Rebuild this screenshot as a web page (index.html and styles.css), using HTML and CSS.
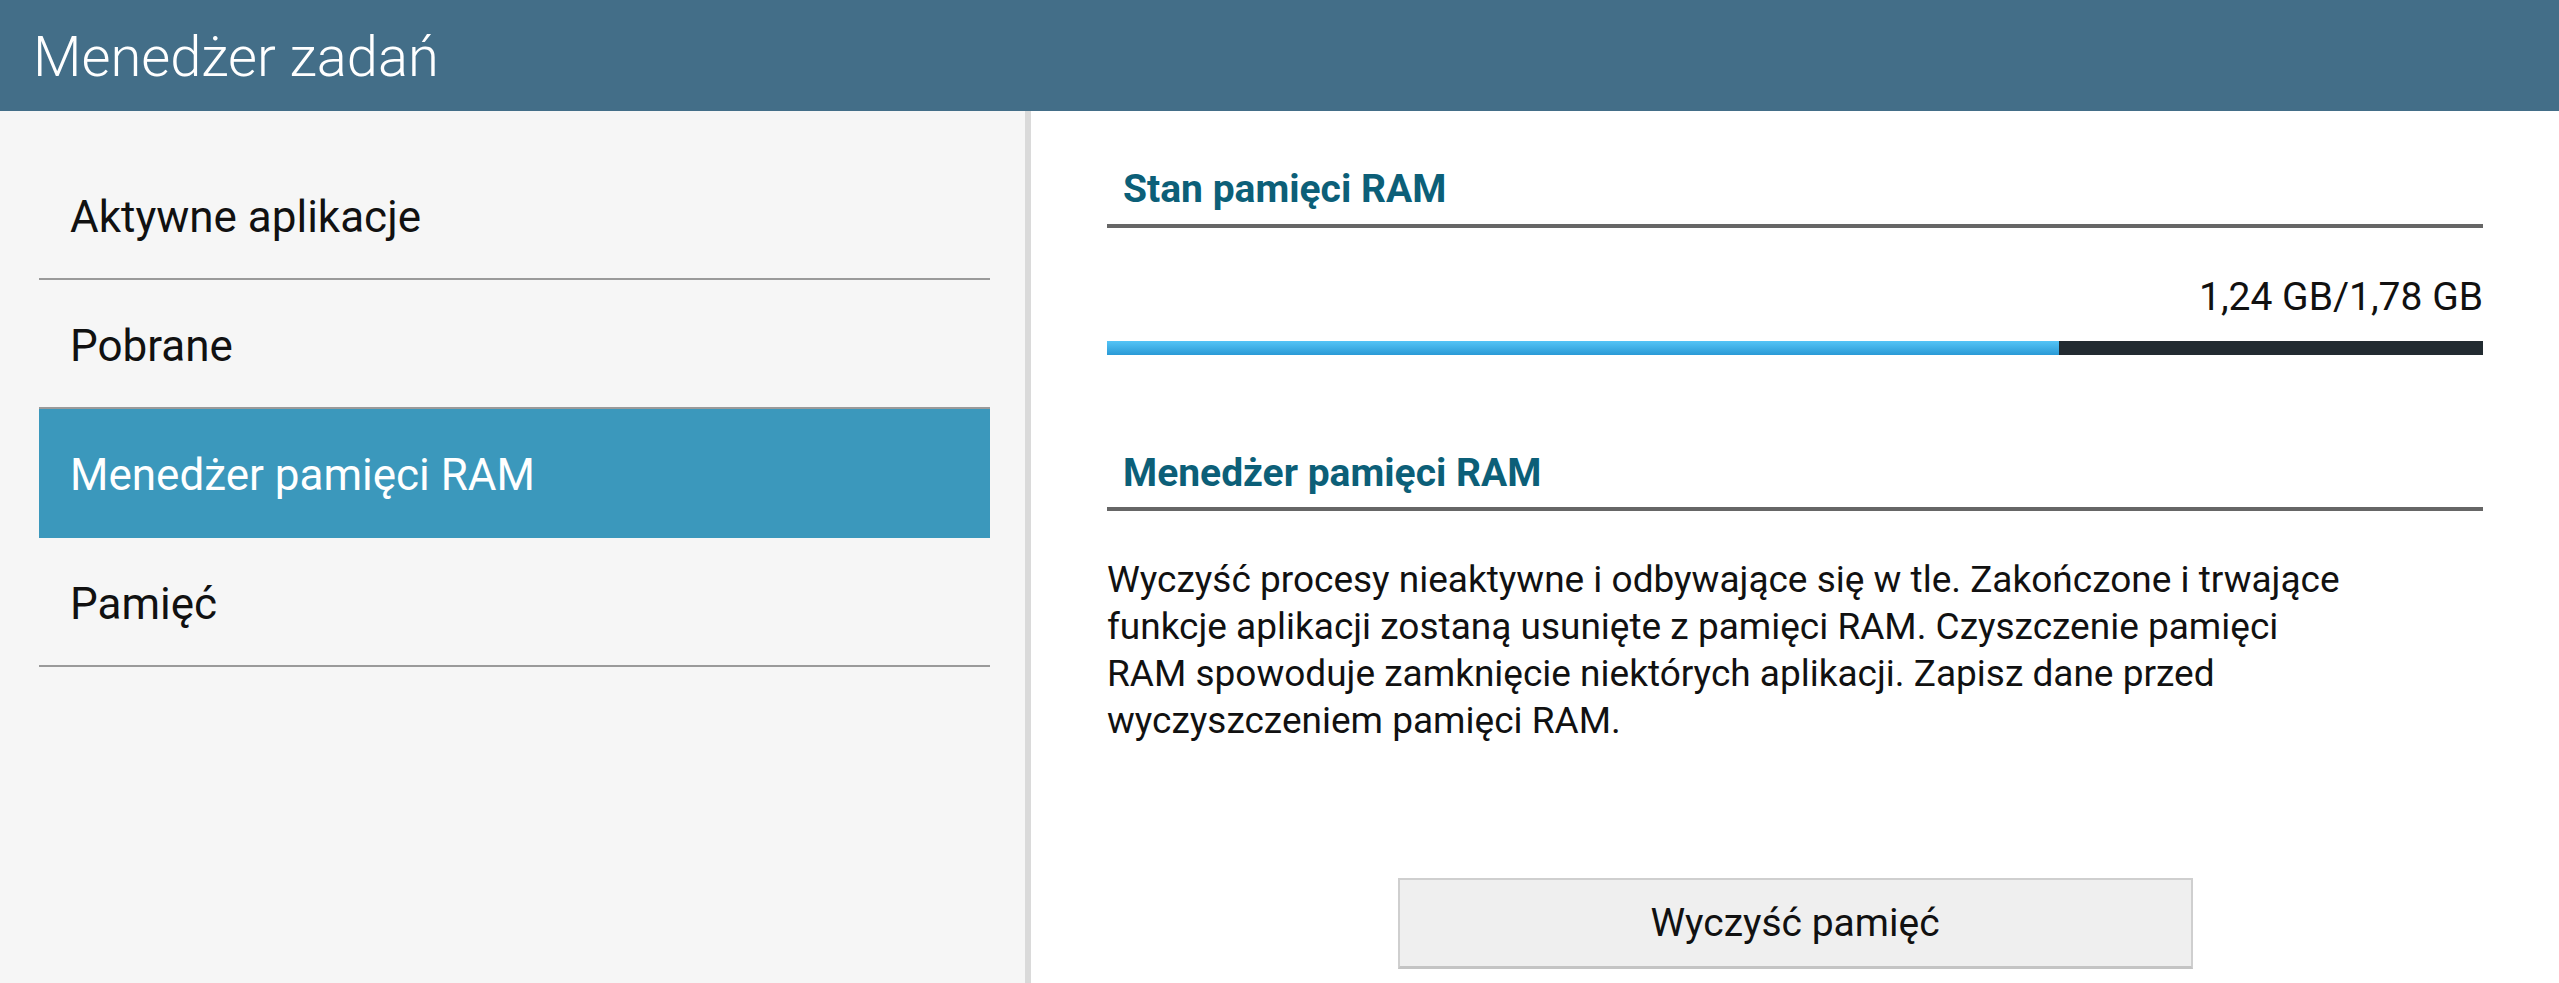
FILE: index.html
```html
<!DOCTYPE html>
<html lang="pl">
<head>
    <meta charset="UTF-8">
    <meta name="viewport" content="width=device-width, initial-scale=1.0">
    <title>Menedżer zadań</title>
    <link rel="stylesheet" href="styles.css">
</head>
<body>
    <header class="app-bar">
        <h1 class="app-title">Menedżer zadań</h1>
    </header>

    <div class="main">
        <nav class="sidebar">
            <div class="menu-item">Aktywne aplikacje</div>
            <div class="menu-item">Pobrane</div>
            <div class="menu-item selected">Menedżer pamięci RAM</div>
            <div class="menu-item">Pamięć</div>
        </nav>

        <section class="content">
            <h2 class="section-title">Stan pamięci RAM</h2>
            <div class="usage-text">1,24 GB/1,78 GB</div>
            <div class="usage-bar">
                <div class="usage-fill" style="width: 69.2%"></div>
            </div>

            <h2 class="section-title second">Menedżer pamięci RAM</h2>
            <p class="description">
                Wyczyść procesy nieaktywne i odbywające się w tle. Zakończone i trwające<br>
                funkcje aplikacji zostaną usunięte z pamięci RAM. Czyszczenie pamięci<br>
                RAM spowoduje zamknięcie niektórych aplikacji. Zapisz dane przed<br>
                wyczyszczeniem pamięci RAM.
            </p>

            <button class="clear-button">Wyczyść pamięć</button>
        </section>
    </div>
</body>
</html>
```

FILE: styles.css
```css
* {
    box-sizing: border-box;
}
body {
    margin: 0;
    height: 100vh;
    display: flex;
    flex-direction: column;
    overflow: hidden;
    font-family: Roboto, "Noto Sans", sans-serif;
    color: #111;
    background-color: #fff;
}

/* Top bar */
.app-bar {
    height: 111px;
    flex-shrink: 0;
    background-color: #436e88;
    padding: 4px 0 0 33px;
}
.app-title {
    margin: 0;
    font-size: 56px;
    font-weight: 300;
    line-height: 107px;
    color: #fff;
}

.main {
    flex: 1;
    display: flex;
}

/* Left menu */
.sidebar {
    width: 1031px;
    flex-shrink: 0;
    background-color: #f6f6f6;
    border-right: 6px solid #dadada;
    padding: 40px 35px 0 39px;
}
.menu-item {
    height: 129px;
    padding: 6px 0 0 31px;
    font-size: 44px;
    line-height: 121px;
    border-bottom: 2px solid #9a9a9a;
}
.menu-item.selected {
    background-color: #3b98bc;
    border-bottom-color: #3b98bc;
    color: #fff;
}

/* Right content */
.content {
    flex: 1;
    padding: 55px 76px 0 76px;
}
.section-title {
    margin: 0;
    padding: 0 0 12px 16px;
    font-size: 39px;
    font-weight: 700;
    line-height: 46px;
    color: #0c5f78;
    border-bottom: 4px solid #666;
}
.section-title.second {
    margin-top: 95px;
    padding-bottom: 11px;
}
.usage-text {
    margin-top: 46px;
    text-align: right;
    font-size: 39px;
    line-height: 46px;
}
.usage-bar {
    margin-top: 21px;
    height: 14px;
    background-color: #222b31;
}
.usage-fill {
    height: 100%;
    background: linear-gradient(to bottom, #54c4f6, #2a9ad6);
}
.description {
    margin: 45px 0 0 0;
    font-size: 37px;
    line-height: 47px;
    white-space: nowrap;
}
.clear-button {
    display: block;
    width: 795px;
    height: 91px;
    margin: 134px auto 0 auto;
    background-color: #efefef;
    border: 2px solid #cfcfcf;
    border-bottom: 3px solid #c4c4c4;
    font-family: Roboto, "Noto Sans", sans-serif;
    font-size: 39px;
    color: #111;
    padding: 0;
}
```
